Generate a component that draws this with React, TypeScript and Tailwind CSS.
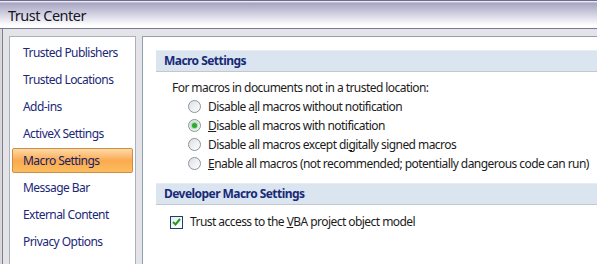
import React from "react";

const navItems = [
  "Trusted Publishers",
  "Trusted Locations",
  "Add-ins",
  "ActiveX Settings",
  "Macro Settings",
  "Message Bar",
  "External Content",
  "Privacy Options",
];

const Radio = ({ checked }: { checked?: boolean }) => (
  <span className="flex h-[13px] w-[13px] shrink-0 items-center justify-center rounded-full border border-[#8b939c] bg-gradient-to-br from-[#dcdfe3] to-white">
    {checked && (
      <span className="h-[5px] w-[5px] rounded-full bg-[#2fa82f] shadow-[0_0_2px_1px_rgba(120,210,120,0.8)]" />
    )}
  </span>
);

const options: React.ReactNode[] = [
  <>Disable a<u>l</u>l macros without notification</>,
  <><u>D</u>isable all macros with notification</>,
  <>Disable all macros except di<u>g</u>itally signed macros</>,
  <><u>E</u>nable all macros (not recommended; potentially dangerous code can run)</>,
];

const SectionHeader = ({ title }: { title: string }) => (
  <div className="ml-[13px] flex h-[22px] items-center border-t border-b border-t-[#e6edf5] border-b-[#c3c8cf] bg-[#dbe5ef] pl-[8px] font-bold text-[#182a78]">
    {title}
  </div>
);

export default function App() {
  return (
    <div
      className="flex h-[264px] w-[597px] flex-col overflow-hidden bg-[#e4e4e8] text-[12px] leading-[18px] tracking-[-0.55px] whitespace-nowrap"
      style={{ fontFamily: '"Noto Sans", "Open Sans", sans-serif' }}
    >
      {/* title bar */}
      <div className="h-[29px] shrink-0 border-t border-b border-t-[#6f6b8c] border-b-[#7a7797] bg-gradient-to-b from-white via-[#a8a5c3] via-[8%] to-white to-[90%] pl-[8px] pt-[4px] text-[14.5px] leading-[20px] tracking-[-0.5px] text-[#16162a]">
        Trust Center
      </div>

      <div className="flex flex-1 bg-[#d8d8dc] pl-[2px]">
        <div className="flex flex-1 border-l border-[#80808c] bg-[#e4e4e8] pl-[6px] pt-[7px]">
          {/* left nav */}
          <div className="w-[127px] shrink-0 border-l border-t border-r border-[#a9b1bd] bg-white px-[2px] pt-[3px]">
            <div className="flex flex-col gap-[2px]">
              {navItems.map((item) =>
                item === "Macro Settings" ? (
                  <div
                    key={item}
                    className="flex h-[25px] items-center rounded-[2px] border border-[#c98f45] bg-gradient-to-b from-[#fdd9a6] via-[#fbaa4e] to-[#fbbd5e] pl-[10px] text-[#15206a]"
                  >
                    {item}
                  </div>
                ) : (
                  <div key={item} className="flex h-[25px] items-center pl-[11px] text-[#1b2777]">
                    {item}
                  </div>
                )
              )}
            </div>
          </div>

          {/* right content */}
          <div className="ml-[6px] flex-1 border-l border-t border-[#8fa0b3] bg-white pt-[13px] text-[#1c1c1c]">
            <SectionHeader title="Macro Settings" />
            <div className="mt-[7px] pl-[29px] leading-[18px]">For macros in documents not in a trusted location:</div>
            <div className="flex flex-col pl-[45px]">
              {options.map((label, i) => (
                <div key={i} className="flex h-[19px] items-center gap-[7px]">
                  <Radio checked={i === 1} />
                  <span>{label}</span>
                </div>
              ))}
            </div>
            <div className="mt-[10px]">
              <SectionHeader title="Developer Macro Settings" />
            </div>
            <div className="mt-[8px] flex items-center gap-[7px] pl-[27px]">
              <span className="flex h-[13px] w-[13px] shrink-0 items-center justify-center border border-[#1c3f6e] bg-gradient-to-br from-[#e8ecf0] to-white">
                <svg width="9" height="8" viewBox="0 0 9 8">
                  <path d="M1 4 L3.5 6.5 L8 1" fill="none" stroke="#239a23" strokeWidth="2" />
                </svg>
              </span>
              <span>
                Trust access to the <u>V</u>BA project object model
              </span>
            </div>
          </div>
        </div>
      </div>
    </div>
  );
}
